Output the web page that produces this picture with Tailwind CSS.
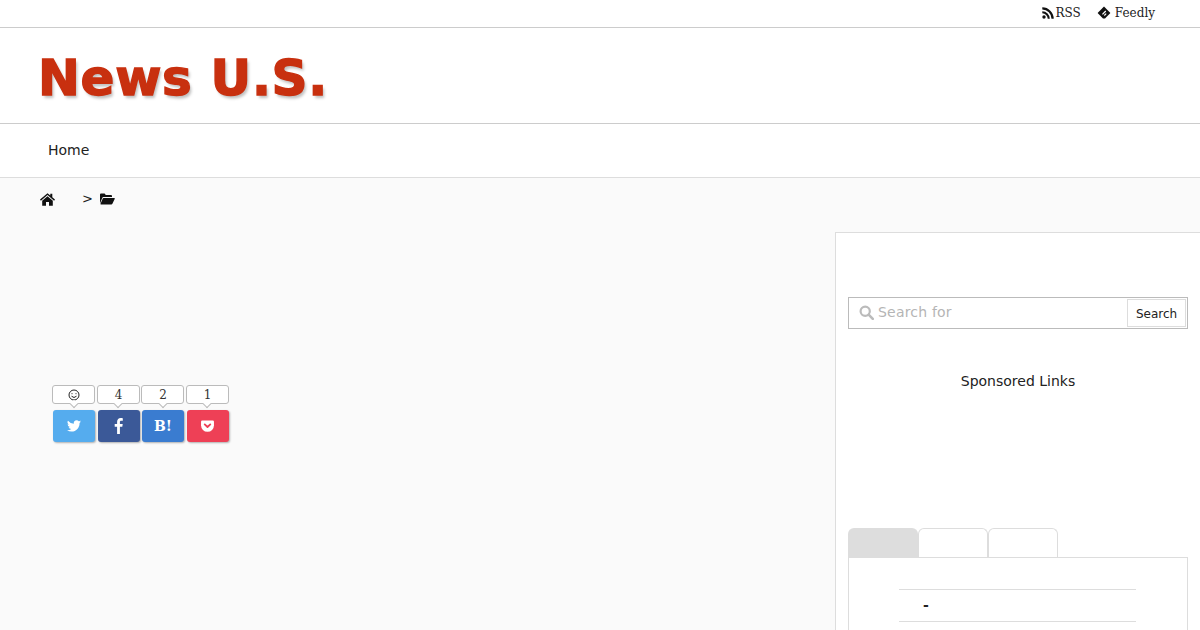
<!DOCTYPE html>
<html lang="ja">
<head>
    <meta charset="UTF-8">
    <title>News U.S.</title>
    <script src="https://cdn.jsdelivr.net/npm/@tailwindcss/browser@4"></script>
</head>
<body class="bg-[#fafafa] font-['DejaVu_Sans',sans-serif] text-[#222]">
<div class="h-[630px] overflow-hidden">
    <!-- Top bar -->
    <div class="h-[28px] bg-white border-b border-[#ccc] flex justify-end items-center pr-[45px] pb-[2px] font-['DejaVu_Serif',serif] text-[12px] text-[#222] gap-[16px]">
        <a class="flex items-center gap-[2px]">
            <svg class="w-[12px] h-[12px]" viewBox="0 0 12 12" fill="#111"><circle cx="2" cy="10" r="1.7"/><path d="M0.3 4.2v2.1a5.4 5.4 0 0 1 5.4 5.4h2.1a7.5 7.5 0 0 0-7.5-7.5z"/><path d="M0.3 0.3v2.2a9.2 9.2 0 0 1 9.2 9.2h2.2A11.4 11.4 0 0 0 0.3 0.3z"/></svg>
            <span>RSS</span>
        </a>
        <a class="flex items-center gap-[4px]">
            <svg class="w-[14px] h-[14px]" viewBox="0 0 14 14"><path fill="#111" d="M7 .6 L13.4 7 L8 12.6 H6 L.6 7 Z"/><path fill="#fff" d="M8.3 4.6 L9.2 5.5 L5.9 8.8 L5 7.9z M8.8 7.2 L9.6 8 L7.7 9.9 L6.9 9.1z"/></svg>
            <span>Feedly</span>
        </a>
    </div>

    <!-- Logo -->
    <header class="h-[96px] bg-white border-b border-[#ccc] pl-[38px] pt-[5px] flex items-center">
        <div class="font-['DejaVu_Sans',sans-serif] font-bold text-[50px] leading-none tracking-[0.7px] text-[#c8300f] [-webkit-text-stroke:1.4px_#c8300f] [text-shadow:2px_3px_3px_rgba(0,0,0,0.25)] whitespace-nowrap">News U.S.</div>
    </header>

    <!-- Nav -->
    <nav class="h-[54px] bg-white border-b border-[#ddd] pl-[48px] flex items-center text-[14px] text-[#222]">Home</nav>

    <!-- Breadcrumb -->
    <div class="h-[43px] pl-[40px] flex items-center text-[14px] pb-[1px]">
        <svg class="w-[15px] h-[13px]" viewBox="0 0 15 13" fill="#111"><path d="M7.5 0.2 L0 6.6 L0.9 7.7 L7.5 2.1 L14.1 7.7 L15 6.6 L12.3 4.3 V0.8 H10.3 V2.6z"/><path d="M7.5 3.3 L2.2 7.8 V12.8 H6 V9 H9 V12.8 H12.8 V7.8z"/></svg>
        <span class="ml-[27px] mr-[7px] font-['DejaVu_Serif',serif] text-[13px]">&gt;</span>
        <svg class="w-[15px] h-[12px]" viewBox="0 0 15 12" fill="#111"><path d="M0 10.5 V1.6 Q0 .6 1 .6 H4.6 L5.8 2 H11 Q12 2 12 3 V4 H3.4 Q2.7 4 2.3 4.7z"/><path d="M3.5 5 H14.2 Q15.2 5 14.8 5.8 L12.4 10.8 Q12 11.4 11.4 11.4 H0.9 Q0.2 11.4 0.5 10.7 L2.8 5.5 Q3 5 3.5 5z"/></svg>
    </div>

    <div class="flex items-start">
        <!-- Main column -->
        <main class="w-[835px] pl-[52px] pt-[164px] shrink-0">
            <div class="grid grid-cols-[43px_43px_43px_43px] gap-x-[1.5px] w-[178px] font-['DejaVu_Serif',serif] text-[12px] text-[#333]">
                <div class="relative h-[19px] bg-white border border-[#bbb] rounded-[3px] flex items-center justify-center">
                    <svg class="w-[12px] h-[12px]" viewBox="0 0 12 12" fill="none" stroke="#222"><circle cx="6" cy="6" r="5"/><path d="M3.5 7.2 Q6 9.8 8.5 7.2"/><path d="M4 4.2v1M8 4.2v1"/></svg>
                    <span class="absolute -bottom-[4px] left-1/2 -ml-[3px] w-[6px] h-[6px] rotate-45 bg-white border-r border-b border-[#bbb]"></span>
                </div>
                <div class="relative h-[19px] pl-[1px] bg-white border border-[#bbb] rounded-[3px] flex items-center justify-center">4<span class="absolute -bottom-[4px] left-1/2 -ml-[3px] w-[6px] h-[6px] rotate-45 bg-white border-r border-b border-[#bbb]"></span></div>
                <div class="relative h-[19px] pl-[1px] bg-white border border-[#bbb] rounded-[3px] flex items-center justify-center">2<span class="absolute -bottom-[4px] left-1/2 -ml-[3px] w-[6px] h-[6px] rotate-45 bg-white border-r border-b border-[#bbb]"></span></div>
                <div class="relative h-[19px] pl-[1px] bg-white border border-[#bbb] rounded-[3px] flex items-center justify-center">1<span class="absolute -bottom-[4px] left-1/2 -ml-[3px] w-[6px] h-[6px] rotate-45 bg-white border-r border-b border-[#bbb]"></span></div>

                <div class="mt-[6px] h-[32px] ml-[1px] w-[42px] bg-[#55acee] rounded-[3px] shadow-[1px_1px_2px_rgba(0,0,0,0.3)] flex items-center justify-center">
                    <svg class="w-[14px] h-[12px]" viewBox="0 0 24 20" fill="#fff"><path d="M24 2.4a9.8 9.8 0 0 1-2.8.8A4.9 4.9 0 0 0 23.3.5a9.8 9.8 0 0 1-3.1 1.2 4.9 4.9 0 0 0-8.4 4.5A14 14 0 0 1 1.7.9a4.9 4.9 0 0 0 1.5 6.6 4.9 4.9 0 0 1-2.2-.6v.1a4.9 4.9 0 0 0 3.9 4.8 4.9 4.9 0 0 1-2.2.1 4.9 4.9 0 0 0 4.6 3.4A9.9 9.9 0 0 1 0 17.3 14 14 0 0 0 7.5 19.5c9 0 14-7.5 14-14v-.6a10 10 0 0 0 2.5-2.5z"/></svg>
                </div>
                <div class="mt-[6px] h-[32px] ml-[1px] w-[42px] bg-[#3b5998] rounded-[3px] shadow-[1px_1px_2px_rgba(0,0,0,0.3)] flex items-center justify-center">
                    <svg class="w-[9px] h-[16px]" viewBox="0 0 9 16" fill="#fff"><path d="M5.9 16V8.8h2.4l.4-2.8H5.9V4.2c0-.8.2-1.4 1.4-1.4h1.5V.2C8.5.1 7.6 0 6.7 0 4.6 0 3.1 1.3 3.1 3.8V6H.7v2.8h2.4V16z"/></svg>
                </div>
                <div class="mt-[6px] h-[32px] ml-[1px] w-[42px] bg-[#3a7cd0] rounded-[3px] shadow-[1px_1px_2px_rgba(0,0,0,0.3)] flex items-center justify-center text-white font-bold text-[14px]">B!</div>
                <div class="mt-[6px] h-[32px] ml-[1px] w-[42px] bg-[#ee4056] rounded-[3px] shadow-[1px_1px_2px_rgba(0,0,0,0.3)] flex items-center justify-center">
                    <svg class="w-[13px] h-[12px]" viewBox="0 0 14 13"><path fill="#fff" d="M1.3 0.5 H12.7 Q14 0.5 14 1.8 V5.8 A7 7 0 0 1 0 5.8 V1.8 Q0 0.5 1.3 0.5z"/><path fill="none" stroke="#ee4056" stroke-width="2" stroke-linecap="round" stroke-linejoin="round" d="M4 4.8 L7 7.6 L10 4.8"/></svg>
                </div>
            </div>
        </main>

        <!-- Sidebar -->
        <aside class="w-[365px] h-[398px] overflow-hidden bg-white border-t border-l border-[#ddd] mt-[11px] px-[12px] pt-[64px]">
            <div class="h-[32px] w-[340px] border border-[#bbb] flex items-center">
                <svg class="ml-[10px] mb-[2px] w-[15px] h-[15px]" viewBox="0 0 15 15" fill="none" stroke="#bbb" stroke-width="2.2"><circle cx="6.2" cy="6.2" r="4.6"/><path d="M9.6 9.6 L13.8 13.8" stroke-linecap="round" stroke-width="2.6"/></svg>
                <span class="ml-[4px] mb-[2px] text-[14px] text-[#b5b5b5] tracking-[0.2px]">Search for</span>
                <div class="ml-auto mr-[1px] w-[59px] h-[28px] border border-[#ddd] flex items-center justify-center text-[12px] text-[#222] pt-[1px]">Search</div>
            </div>
            <div class="mt-[42px] w-[340px] text-center text-[14px] leading-[20px] text-[#222]">Sponsored Links</div>
            <div class="mt-[137px] flex h-[29px] w-[340px]">
                <div class="w-[70px] bg-[#ddd] rounded-t-[6px]"></div>
                <div class="w-[70px] border-t border-x border-[#ddd] rounded-t-[6px]"></div>
                <div class="w-[70px] border-t border-x border-[#ddd] rounded-t-[6px]"></div>
            </div>
            <div class="w-[340px] h-[100px] border border-[#ddd] pt-[31px] px-[50px]">
                <div class="w-[237px] h-[33px] border-y border-[#ddd] pl-[24px] flex items-center text-[14px] font-bold text-[#222]">-</div>
            </div>
        </aside>
    </div>
</div>
</body>
</html>
